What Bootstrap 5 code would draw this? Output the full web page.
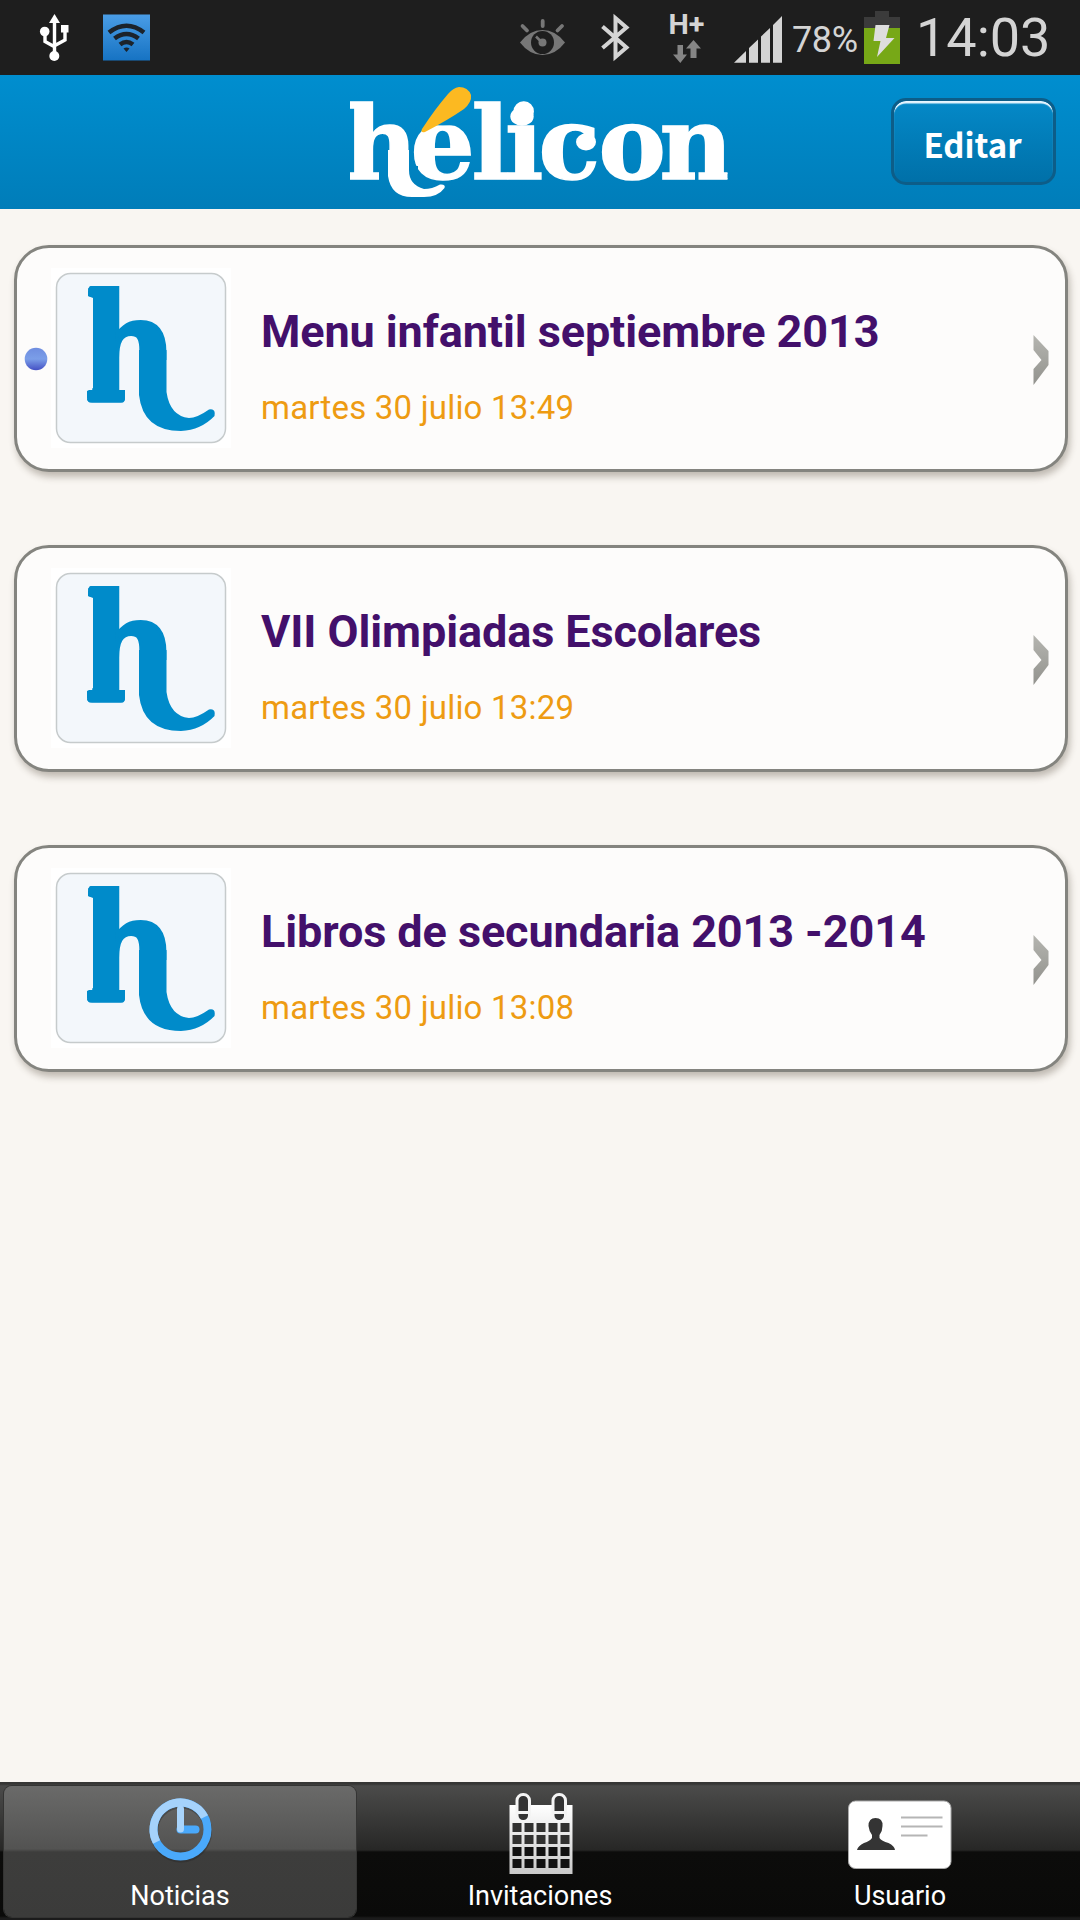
<!DOCTYPE html>
<html lang="es">
<head>
<meta charset="utf-8">
<meta name="viewport" content="width=device-width, initial-scale=1">
<title>Hélicon</title>
<link rel="stylesheet" href="https://cdn.jsdelivr.net/npm/bootstrap@5.3.0/dist/css/bootstrap.min.css">
<style>
body{font-family:Roboto,"Noto Sans",sans-serif;background:#f9f6f2;width:1080px;height:1920px;overflow:hidden}
svg{display:block;flex:none}
.statusbar{height:75px;background:#1e1e1e;color:#d4d4d4;padding-left:34px}
.pct{width:72px;font-size:36px;line-height:75px;padding-top:3px;white-space:nowrap;letter-spacing:-.4px}
.clock{width:164px;font-size:54px;line-height:75px;white-space:nowrap}
.topbar{height:134px;background:linear-gradient(#008ecf,#007db9)}
.side{flex:1 1 0}
.btn-edit{width:165px;height:87px;margin:-2px 24px 0 0;border:3px solid #0d5d88;border-radius:15px;background:linear-gradient(#0489c8,#0070a8);box-shadow:inset 0 3px 1px -0.5px #e8f6ff;color:#fff;font:700 33px/1 "Noto Sans CJK SC","Open Sans",sans-serif;padding:6px 2px 0 0}
.btn-edit:hover{color:#fff}
.news{padding:36px 12px 0 14px;gap:73px}
.news-card{height:227px;border:3px solid #84847f;border-radius:35px;background:#fdfcfb;box-shadow:2px 5px 7px rgba(70,60,45,.32);color:inherit}
.news-card>svg{margin-top:-1px}
.news-text{padding:15px 0 0 30px}
.news-title{font-size:45px;line-height:54px;font-weight:700;color:#43106b;white-space:nowrap;margin:0;letter-spacing:-.1px}
.news-date{font-size:33px;line-height:40px;color:#ee9b12;margin:29px 0 0;white-space:nowrap;letter-spacing:.2px}
.tabs{height:138px;background:linear-gradient(#363635 0,#363635 2px,#4b4b4a 4px,#272726 68px,#0c0c0b 70px,#0a0a09 134px,#1b1b1b 136px);padding-top:4px}
.tab-item{width:360px;height:131px;color:#fff;text-decoration:none}
.tab-item.active>div{background:linear-gradient(#6a6a69 0,#535352 63px,#3d3d3c 66px,#3b3b3a 100%);border-radius:8px;margin:0 4px;box-shadow:0 0 0 1px #343433}
.tab-item>div{height:131px}
.tab-item span{font-size:27px;line-height:34px}
</style>
</head>
<body class="d-flex flex-column">
<div class="statusbar d-flex flex-none">
  <svg width="40" height="75" viewBox="34 0 40 75"><g fill="none" stroke="#fff" stroke-width="3.4"><path d="M54.5 20v36M45 31v10.5l9 5M65 31v9l-11 6"/></g><g fill="#fff"><path d="M54.5 14l5.5 9h-11z"/><circle cx="44.7" cy="31.5" r="4.8"/><path d="M61 25h7.5v7.5H61z"/><circle cx="54.3" cy="56" r="5"/></g></svg>
  <svg width="77" height="75" viewBox="74 0 77 75"><defs><linearGradient id="wf" x2="0" y2="1"><stop stop-color="#4a9de6"/><stop offset="1" stop-color="#1673c3"/></linearGradient></defs><rect x="103" y="14.5" width="47" height="46" fill="url(#wf)"/><g fill="none" stroke="#1c232b" stroke-width="4.600"><path d="M109 32.500q17.500-13.500 35 0"/><path d="M114.500 38.500q12-9 24 0"/><path d="M120 44.500q6.500-5 13 0"/></g><path d="M123.500 48.500q3-2 6 0l-3 3.500z" fill="#1c232b"/></svg>
  <svg class="ms-auto" width="58" height="75" viewBox="514 0 58 75"><g stroke="#777" stroke-width="3.800" stroke-linecap="round" fill="none"><path d="M522.500 26l4.500 4.500M542.700 21v5M562 26l-4.500 4.500"/></g><path d="M520 42.500q9.500-12.500 22.500-12.500t22.500 12.500Q555.500 55 542.500 55T520 42.500" fill="#777"/><circle cx="542.500" cy="42.500" r="11.500" fill="#1e1e1e"/><circle cx="542.500" cy="42.500" r="4" fill="#777"/><path d="M536 36.500l5 5" stroke="#777" stroke-width="2.500"/></svg>
  <svg width="88" height="75" viewBox="572 0 88 75"><path d="M602.500 26.500L626.500 47.500L615.500 57V18L626.500 27.500L602.500 48" fill="none" stroke="#d4d4d4" stroke-width="4"/></svg>
  <svg width="70" height="75" viewBox="660 0 70 75"><text x="668.500" y="34" font-family="Roboto" font-weight="700" font-size="28" textLength="36" lengthAdjust="spacingAndGlyphs" fill="#d4d4d4">H+</text><path d="M677.500 45h5.500v9.500h4l-6.700 8.500-7.300-8.500h4.500zM690.500 58v-9.500H686l7.500-8.500 7.500 8.500h-4.500V58z" fill="#858585"/></svg>
  <svg width="62" height="75" viewBox="730 0 62 75"><path d="M734 62.700L746 51v11.700zM749 48l9-8.500v23.200h-9zM761 36.500l9-8.500v34.700h-9zM773 25l9-9v46.700h-9z" fill="#d4d4d4"/></svg>
  <div class="pct">78%</div>
  <svg width="52" height="75" viewBox="864 0 52 75"><path d="M864 28V17h11v-6h14v6h11v11z" fill="#3b3b3b"/><path d="M864 28h36v36h-36z" fill="#77a817"/><path d="M875.500 25h14l-3.500 13h8.500L877 57l3.500-16H873.500z" fill="#dedede"/></svg>
  <div class="clock">14:03</div>
</div>

<header class="topbar d-flex align-items-center flex-none">
  <div class="side"></div>
  <svg class="overflow-visible" width="382" height="134" viewBox="349 75 382 134" role="img" aria-label="hélicon">
    <defs><clipPath id="wordclip"><path d="M350 90H413V160H379V190H350zM413 125.500H474V190H418V166H413zM474 90H727.500V190H474z"/></clipPath></defs>
    <text clip-path="url(#wordclip)" x="344 410.500 471.500 505 538.500 598.500 659.500" y="179" font-family="DejaVu Serif" font-weight="700" font-size="101" fill="#fff" stroke="#fff" stroke-width="1.500">hélicon</text>
    <ellipse cx="522" cy="116.500" rx="11.700" ry="9.300" fill="#fff"/>
    <ellipse cx="586" cy="142" rx="10" ry="8.500" fill="#fff"/>
    <path d="M388 150V176Q391 197 412 197H424Q438 197 444.500 188 446 184 440 184.500 432 189 424 189 409 185 409 170V150z" fill="#fff"/>
    <path d="M422 129q-2 4 3 3Q448 120 464 109 472 102 471 95 468 87 459 87 453 88 448 94 435 109 422 129" fill="#fcb921"/>
  </svg>
  <div class="side d-flex justify-content-end"><button class="btn btn-edit" type="button">Editar</button></div>
</header>

<svg width="0" height="0" class="position-absolute"><defs>
  <linearGradient id="dotg" x2="0" y2="1"><stop stop-color="#6f8de0"/><stop offset=".5" stop-color="#7b9ee8"/><stop offset="1" stop-color="#4450c4"/></linearGradient>
  <linearGradient id="chev" x2="0" y2="1"><stop stop-color="#b5b5b0"/><stop offset="1" stop-color="#92928d"/></linearGradient>
  <clipPath id="hclip"><path d="M88 291q0-6 6-6H180V360H125V398q0 5-4 5H92q-5 0-5-5V391l6-3V298l-5-2z"/></clipPath>
  <symbol id="brand" viewBox="51 268 180 180">
    <path d="M51 268h180v180H51z" fill="#fff"/>
    <rect x="56.500" y="273.500" width="169" height="169" rx="14" fill="#f3f7fb" stroke="#c6cbcc" stroke-width="1.500"/>
    <g clip-path="url(#hclip)"><text transform="translate(79.500 401) scale(.913 1)" font-family="DejaVu Serif" font-weight="700" font-size="148" fill="#008bca" stroke="#008bca" stroke-width="4">h</text></g>
    <path d="M139 350V395Q143 431 181 431 201 430 214.500 416 216 408 209 409.500 197 418 189 418 170 416 166.500 392V350z" fill="#008bca"/>
  </symbol>
</defs></svg>

<main class="news d-flex flex-column flex-grow-1">
  <a href="#" class="news-card d-flex align-items-center text-decoration-none">
    <svg width="34" height="220" viewBox="17 248 34 220"><circle cx="36" cy="359" r="11.300" fill="url(#dotg)"/></svg>
    <svg width="180" height="180"><use href="#brand"/></svg>
    <div class="news-text flex-grow-1"><h2 class="news-title">Menu infantil septiembre 2013</h2><p class="news-date">martes 30 julio 13:49</p></div>
    <svg width="32" height="220" viewBox="1033 248 32 220"><path d="M1033.500 335L1048.500 351v14L1033.500 385v-16l8-9-8-10z" fill="url(#chev)"/></svg>
  </a>
  <a href="#" class="news-card d-flex align-items-center text-decoration-none">
    <svg width="34" height="220"></svg>
    <svg width="180" height="180"><use href="#brand"/></svg>
    <div class="news-text flex-grow-1"><h2 class="news-title">VII Olimpiadas Escolares</h2><p class="news-date">martes 30 julio 13:29</p></div>
    <svg width="32" height="220" viewBox="1033 248 32 220"><path d="M1033.500 335L1048.500 351v14L1033.500 385v-16l8-9-8-10z" fill="url(#chev)"/></svg>
  </a>
  <a href="#" class="news-card d-flex align-items-center text-decoration-none">
    <svg width="34" height="220"></svg>
    <svg width="180" height="180"><use href="#brand"/></svg>
    <div class="news-text flex-grow-1"><h2 class="news-title">Libros de secundaria 2013 -2014</h2><p class="news-date">martes 30 julio 13:08</p></div>
    <svg width="32" height="220" viewBox="1033 248 32 220"><path d="M1033.500 335L1048.500 351v14L1033.500 385v-16l8-9-8-10z" fill="url(#chev)"/></svg>
  </a>
</main>

<nav class="tabs d-flex flex-none">
  <a href="#" class="tab-item active"><div class="d-flex flex-column align-items-center">
    <svg width="110" height="93" viewBox="125 1786 110 93"><g fill="none" stroke-width="8"><g stroke="#222" opacity=".35"><circle cx="181" cy="1831.500" r="27"/></g><circle cx="180.500" cy="1829.500" r="27" stroke="#4aa9fb"/><path d="M156.500 1842A27 27 0 0 1 204.500 1817" stroke="#a5d2fb"/><path d="M180.500 1829.500h15" stroke="#4aa9fb" stroke-linecap="round"/><path d="M180.500 1809v20" stroke="#a9d4fb" stroke-width="7" stroke-linecap="round"/></g></svg>
    <span>Noticias</span></div></a>
  <a href="#" class="tab-item"><div class="d-flex flex-column align-items-center">
    <svg width="110" height="93" viewBox="485.500 1786 110 93"><defs><linearGradient id="cg" x2="0" y2="1"><stop stop-color="#fff"/><stop offset="1" stop-color="#c9c9c9"/></linearGradient></defs><path d="M510 1805h63v69h-63z" fill="url(#cg)"/><g fill="#333" stroke="#f4f4f4" stroke-width="3"><rect x="517.500" y="1794.500" width="12.500" height="27" rx="6"/><rect x="553.500" y="1794.500" width="12.500" height="27" rx="6"/></g><path d="M518 1812.500h12M554 1812.500h12" stroke="#f4f4f4" stroke-width="3"/>
    <g stroke-width="9" stroke-dasharray="9 3" fill="none"><path d="M513 1827.500h57M513 1839.500h57" stroke="#313130"/><path d="M513 1851.500h57M513 1863.500h57" stroke="#111"/></g></svg>
    <span>Invitaciones</span></div></a>
  <a href="#" class="tab-item"><div class="d-flex flex-column align-items-center">
    <svg width="110" height="93" viewBox="845 1786 110 93"><rect x="848.500" y="1801" width="102.500" height="67.500" rx="7" fill="#fff" stroke="#aaa"/><path d="M875.500 1818q7.500 0 7 8 0 5-3 9v3q2 3 9 5 6 3 6.500 7h-38q1-4 7-7 6-2 8-5v-3q-3-4-3.500-9 0-8 7-8" fill="#343434"/><path d="M901 1817.500h41.500M901 1826.500h41.500M901 1835.500h26.500" stroke="#b5b5b5" stroke-width="2"/></svg>
    <span>Usuario</span></div></a>
</nav>
<script src="https://cdn.jsdelivr.net/npm/bootstrap@5.3.0/dist/js/bootstrap.bundle.min.js"></script>
</body>
</html>
